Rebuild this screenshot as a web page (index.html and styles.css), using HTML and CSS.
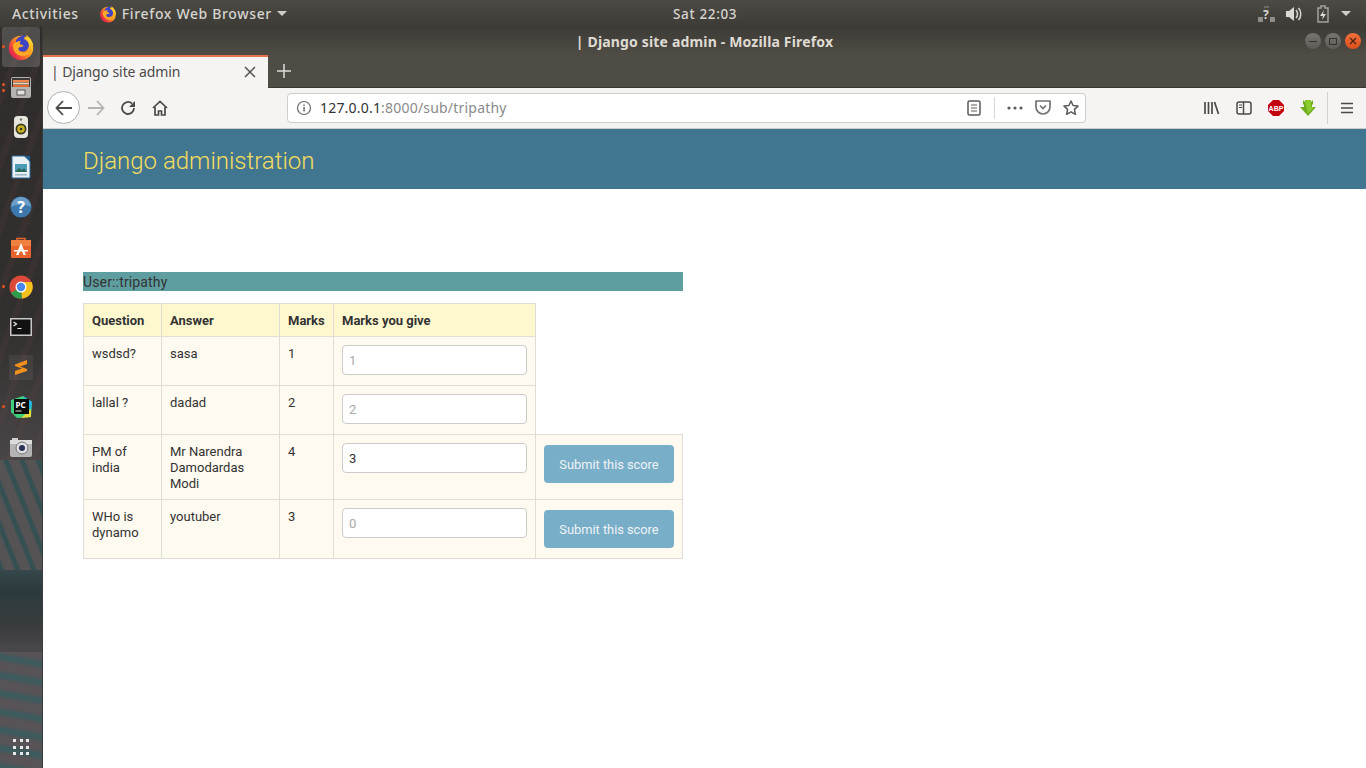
FILE: index.html
```html
<!DOCTYPE html>
<html lang="en">
<head>
    <meta charset="UTF-8">
    <title>| Django site admin - Mozilla Firefox</title>
    <link rel="stylesheet" href="styles.css">
</head>
<body>
    <svg class="sprite" width="0" height="0">
        <defs>
            <linearGradient id="foxOuter" x1="0.9" y1="0.1" x2="0.1" y2="0.7">
                <stop offset="0" stop-color="#ffd52c"/>
                <stop offset="0.5" stop-color="#ff8f1e"/>
                <stop offset="1" stop-color="#e8264e"/>
            </linearGradient>
            <symbol id="firefox" viewBox="0 0 32 32">
                <circle cx="16" cy="17" r="14" fill="url(#foxOuter)"/>
                <path d="M22 2c4 3 7 7 8 12l-4-2-3-5z" fill="#ffd230"/>
                <path d="M10 9c2-4 7-7 12-6-2 1-3 3-2 4 2 1 5 3 5 7 0 3-2 6-5 7-4 1-7-1-8-3z" fill="#3f44c4"/>
                <path d="M7 13c-1 7 4 13 11 13 5 0 8-3 9-7-2 2-5 4-9 3-3 0-5-2-5-4 0-1 1-2 3-2l3-1c-1-2-3-2-4-2-1-1 0-3 1-4-4 0-7 2-9 4z" fill="#ffab26"/>
            </symbol>
        </defs>
    </svg>

    <header class="topbar">
        <div class="topbar-left">
            <span class="activities">Activities</span>
            <svg class="app-icon" width="18" height="18"><use href="#firefox"/></svg>
            <span class="app-name">Firefox Web Browser</span>
            <span class="caret"></span>
        </div>
        <div class="clock">Sat 22:03</div>
        <div class="tray">
            <svg class="tray-net" width="20" height="18" viewBox="0 0 20 18" fill="#8f8d87">
                <rect x="7" y="1" width="5" height="2" opacity="0.5"/>
                <rect x="1" y="12" width="5" height="5"/>
                <rect x="13" y="12" width="5" height="5"/>
                <text x="6" y="14" class="tray-mark">?</text>
            </svg>
            <svg class="tray-vol" width="18" height="18" viewBox="0 0 18 18" fill="#dcdad5">
                <path d="M1 6h3l5-4v14l-5-4H1z"/>
                <path d="M11 5c2 2 2 6 0 8M13.500 3c3 3 3 9 0 12" fill="none" stroke="#dcdad5" stroke-width="1.500"/>
            </svg>
            <svg class="tray-batt" width="14" height="18" viewBox="0 0 14 18">
                <path d="M5 1h4v2h3v14H2V3h3z" fill="none" stroke="#a5a39d" stroke-width="1.500"/>
                <path d="M8 5l-4 6h3l-1 4 4-6H7z" fill="#dcdad5"/>
            </svg>
            <span class="caret"></span>
        </div>
    </header>

    <div class="desktop">
        <nav class="dock">
            <div class="dock-item dock-active">
                <span class="dot dot-one"></span>
                <svg width="28" height="28"><use href="#firefox"/></svg>
            </div>
            <div class="dock-item">
                <span class="dot dot-two"></span>
                <span class="dot dot-three"></span>
                <svg width="20" height="21" viewBox="0 0 20 21">
                    <rect width="20" height="21" rx="2" fill="#b5b3af"/>
                    <rect x="1" y="1" width="18" height="9" fill="#3c3836"/>
                    <rect x="2" y="3" width="16" height="2" fill="#f0854a"/>
                    <rect x="2" y="5.500" width="16" height="2" fill="#f6cfae"/>
                    <rect x="2" y="8" width="16" height="2" fill="#e06a30"/>
                    <rect x="6" y="13" width="8" height="5" fill="#e2e1de" stroke="#5a5957"/>
                </svg>
            </div>
            <div class="dock-item">
                <svg width="16" height="24" viewBox="0 0 16 24">
                    <rect x="1" y="1" width="14" height="22" rx="4" fill="#e6e6dc"/>
                    <circle cx="8" cy="14" r="5.500" fill="#3d3a22"/>
                    <circle cx="8" cy="14" r="3.800" fill="#c8b322"/>
                    <circle cx="8" cy="14" r="1.300" fill="#37342a"/>
                    <circle cx="8" cy="4.500" r="1.200" fill="#77766a"/>
                </svg>
            </div>
            <div class="dock-item">
                <svg width="20" height="24" viewBox="0 0 20 24">
                    <path d="M1 1h13l5 5v17H1z" fill="#e8f0f4" stroke="#2b6b9a"/>
                    <path d="M13 1h6v6z" fill="#1d5f91"/>
                    <rect x="4" y="9" width="12" height="8" fill="#4c9cb8"/>
                    <path d="M4 17l4-4 3 2 2-2 3 4z" fill="#2d6a5c"/>
                    <rect x="4" y="19" width="12" height="1.500" fill="#9cb4c2"/>
                </svg>
            </div>
            <div class="dock-item">
                <svg width="22" height="22" viewBox="0 0 22 22">
                    <circle cx="11" cy="11" r="10.500" fill="#3d78ad"/>
                    <path d="M1 11a10 10 0 0 1 20 0c-5-3-15-3-20 0z" fill="#6a9dc8"/>
                    <text x="11" y="17" class="help-mark">?</text>
                </svg>
            </div>
            <div class="dock-item">
                <svg width="20" height="22" viewBox="0 0 20 22">
                    <path d="M6 5V2.500h8V5" fill="none" stroke="#e8642c" stroke-width="1.600"/>
                    <rect y="4" width="20" height="18" rx="1" fill="#e8642c"/>
                    <rect y="4" width="20" height="6" fill="#f08040"/>
                    <path d="M10 7l5 12h-2.500l-2.500-6-2.500 6H5z" fill="#fff"/>
                    <rect x="3" y="14" width="14" height="1.500" fill="#fff"/>
                </svg>
            </div>
            <div class="dock-item">
                <span class="dot dot-one"></span>
                <svg width="24" height="24" viewBox="0 0 24 24">
                    <circle cx="12" cy="12" r="11.500" fill="#dd4a3c"/>
                    <path d="M12 12L2 18a11.500 11.500 0 0 0 11 5.500z" fill="#2f9e4c"/>
                    <path d="M12 7h10.600a11.500 11.500 0 0 1-9.600 16.500z" fill="#f3c21d"/>
                    <circle cx="12" cy="12" r="5.500" fill="#fff"/>
                    <circle cx="12" cy="12" r="4.200" fill="#4a87ec"/>
                </svg>
            </div>
            <div class="dock-item">
                <svg width="22" height="18" viewBox="0 0 22 18">
                    <rect x="0.750" y="0.750" width="20.500" height="16.500" fill="#111" stroke="#c8c8c8" stroke-width="1.500"/>
                    <path d="M3.500 4l3 2-3 2" fill="none" stroke="#eee" stroke-width="1.200"/>
                    <rect x="7.500" y="10" width="4" height="1" fill="#eee"/>
                </svg>
            </div>
            <div class="dock-item">
                <span class="dock-tile">
                    <svg width="12" height="15" viewBox="0 0 12 15">
                        <path d="M12 0v4L5 6.500 12 9v2L0 15v-4l7-2.500L0 6V4.500z" fill="#f39019"/>
                    </svg>
                </span>
            </div>
            <div class="dock-item">
                <span class="dot dot-one"></span>
                <svg width="24" height="24" viewBox="0 0 24 24">
                    <path d="M2 5l12-4 9 6-1 15-14 1-6-6z" fill="#3fd07c"/>
                    <path d="M14 1l9 6-1 9z" fill="#21b5e8"/>
                    <path d="M12 23l10-1 0-8z" fill="#e6d93a"/>
                    <rect x="5" y="4" width="15" height="15" fill="#0b0b0b"/>
                    <text x="6.500" y="12.500" class="pc-mark">PC</text>
                    <rect x="6.500" y="15.500" width="6" height="1" fill="#ddd"/>
                </svg>
            </div>
            <div class="dock-item">
                <svg width="22" height="20" viewBox="0 0 22 20">
                    <rect y="3" width="22" height="17" rx="2" fill="#b4b4b4"/>
                    <rect x="2" y="1" width="6" height="3" fill="#cfcfcf"/>
                    <rect y="3" width="22" height="4" fill="#dcdcdc"/>
                    <circle cx="12" cy="11" r="6" fill="#dedede" stroke="#777"/>
                    <circle cx="12" cy="11" r="3" fill="#27315a"/>
                </svg>
            </div>
            <div class="dock-grid">
                <span></span><span></span><span></span>
                <span></span><span></span><span></span>
                <span></span><span></span><span></span>
            </div>
        </nav>

        <main class="window">
            <div class="titlebar">
                <div class="window-title">| Django site admin - Mozilla Firefox</div>
                <div class="window-buttons">
                    <span class="win-btn"><i class="win-min"></i></span>
                    <span class="win-btn"><i class="win-max"></i></span>
                    <span class="win-btn win-close">
                        <svg width="8" height="8" viewBox="0 0 8 8"><path d="M1 1l6 6M7 1L1 7" stroke="#4a2415" stroke-width="1.300"/></svg>
                    </span>
                </div>
            </div>

            <div class="tabbar">
                <div class="tab">
                    <span class="tab-title">| Django site admin</span>
                    <svg width="12" height="12" viewBox="0 0 12 12"><path d="M1 1l10 10M11 1L1 11" stroke="#55534f" stroke-width="1.500"/></svg>
                </div>
                <svg class="new-tab" width="14" height="14" viewBox="0 0 14 14"><path d="M7 0v14M0 7h14" stroke="#dedcd8" stroke-width="1.500"/></svg>
            </div>

            <div class="toolbar">
                <span class="nav-back">
                    <svg width="18" height="16" viewBox="0 0 18 16"><path d="M8 1L1.500 8 8 15M2 8h15" fill="none" stroke="#4c4a48" stroke-width="1.800"/></svg>
                </span>
                <span class="tool-btn">
                    <svg width="18" height="16" viewBox="0 0 18 16"><path d="M10 1l6.500 7L10 15M16 8H1" fill="none" stroke="#b4b3b1" stroke-width="1.800"/></svg>
                </span>
                <span class="tool-btn">
                    <svg width="16" height="16" viewBox="0 0 16 16"><path d="M14 8a6 6 0 1 1-2-4.500" fill="none" stroke="#4c4a48" stroke-width="1.800"/><path d="M15 1v6H9z" fill="#4c4a48"/></svg>
                </span>
                <span class="tool-btn">
                    <svg width="16" height="16" viewBox="0 0 16 16"><path d="M1 8l7-6.500L15 8M3 7v8h3.500v-4h3v4H13V7" fill="none" stroke="#4c4a48" stroke-width="1.700"/></svg>
                </span>

                <div class="urlbar">
                    <svg width="16" height="16" viewBox="0 0 16 16"><circle cx="8" cy="8" r="6.500" fill="none" stroke="#6a6a6a" stroke-width="1.200"/><rect x="7.300" y="7" width="1.500" height="4.500" fill="#6a6a6a"/><rect x="7.300" y="4.500" width="1.500" height="1.500" fill="#6a6a6a"/></svg>
                    <span class="url-text"><span class="url-host">127.0.0.1</span>:8000/sub/tripathy</span>
                    <span class="url-actions">
                        <span class="url-btn">
                            <svg width="14" height="16" viewBox="0 0 14 16"><rect x="1" y="1" width="12" height="14" rx="1.500" fill="none" stroke="#5c5b59" stroke-width="1.500"/><path d="M4 5h6M4 8h6M4 11h6" stroke="#5c5b59" stroke-width="1.200"/></svg>
                        </span>
                        <span class="url-divider"></span>
                        <span class="url-btn">
                            <svg width="16" height="4" viewBox="0 0 16 4" fill="#5c5b59"><circle cx="2" cy="2" r="1.600"/><circle cx="8" cy="2" r="1.600"/><circle cx="14" cy="2" r="1.600"/></svg>
                        </span>
                        <span class="url-btn">
                            <svg width="16" height="15" viewBox="0 0 16 15"><path d="M1 1h14v6a7 7 0 0 1-14 0z" fill="none" stroke="#72716f" stroke-width="1.700" stroke-linejoin="round"/><path d="M5 5.500l3 3 3-3" fill="none" stroke="#72716f" stroke-width="1.700"/></svg>
                        </span>
                        <span class="url-btn">
                            <svg width="16" height="16" viewBox="0 0 16 16"><path d="M8 1l2.100 4.500 4.900.6-3.600 3.300 1 4.900L8 11.800l-4.400 2.500 1-4.900L1 6.100l4.900-.6z" fill="none" stroke="#5c5b59" stroke-width="1.500" stroke-linejoin="round"/></svg>
                        </span>
                    </span>
                </div>

                <div class="toolbar-right">
                    <span class="tool-btn">
                        <svg width="16" height="14" viewBox="0 0 16 14"><path d="M1 1v12M4.500 1v12M8 1v12M10.500 1l4 12" fill="none" stroke="#4c4a48" stroke-width="1.700"/></svg>
                    </span>
                    <span class="tool-btn">
                        <svg width="16" height="14" viewBox="0 0 16 14"><rect x="1" y="1" width="14" height="12" rx="2" fill="none" stroke="#4c4a48" stroke-width="1.500"/><path d="M7.500 1v12" stroke="#4c4a48" stroke-width="1.500"/><path d="M3 4h3M3 6.500h3" stroke="#4c4a48"/></svg>
                    </span>
                    <span class="tool-btn">
                        <svg width="16" height="16" viewBox="0 0 16 16"><path d="M5 0h6l5 5v6l-5 5H5l-5-5V5z" fill="#c40010"/><text x="8" y="10.800" class="abp-mark">ABP</text></svg>
                    </span>
                    <span class="tool-btn">
                        <svg width="16" height="16" viewBox="0 0 16 16"><path d="M3 0l2 2V0h6v2l2-2v4l-1 1v2h4l-8 9-8-9h4V5L3 4z" fill="#6fae1f"/><path d="M5 0h6v7h3l-6 7z" fill="#8ccb2c"/></svg>
                    </span>
                    <span class="toolbar-sep"></span>
                    <span class="tool-btn">
                        <svg width="12" height="12" viewBox="0 0 12 12"><path d="M0 1.500h12M0 6h12M0 10.500h12" stroke="#4c4a48" stroke-width="1.600"/></svg>
                    </span>
                </div>
            </div>

            <div class="page">
                <div class="site-header">Django administration</div>
                <div class="content">
                    <div class="user-bar">User::tripathy</div>
                    <table class="score-table">
                        <colgroup>
                            <col class="col-question">
                            <col class="col-answer">
                            <col class="col-marks">
                            <col class="col-give">
                            <col class="col-submit">
                        </colgroup>
                        <thead>
                            <tr>
                                <th>Question</th>
                                <th>Answer</th>
                                <th>Marks</th>
                                <th>Marks you give</th>
                            </tr>
                        </thead>
                        <tbody>
                            <tr>
                                <td>wsdsd?</td>
                                <td>sasa</td>
                                <td>1</td>
                                <td class="cell-input"><input class="score-input" type="text" placeholder="1"></td>
                            </tr>
                            <tr>
                                <td>lallal ?</td>
                                <td>dadad</td>
                                <td>2</td>
                                <td class="cell-input"><input class="score-input" type="text" placeholder="2"></td>
                            </tr>
                            <tr>
                                <td>PM of india</td>
                                <td>Mr Narendra Damodardas Modi</td>
                                <td>4</td>
                                <td><input class="score-input" type="text" value="3"></td>
                                <td><button class="score-btn" type="button">Submit this score</button></td>
                            </tr>
                            <tr>
                                <td>WHo is dynamo</td>
                                <td>youtuber</td>
                                <td>3</td>
                                <td><input class="score-input" type="text" placeholder="0"></td>
                                <td><button class="score-btn" type="button">Submit this score</button></td>
                            </tr>
                        </tbody>
                    </table>
                </div>
            </div>
        </main>
    </div>
</body>
</html>
```

FILE: styles.css
```css
* {
    box-sizing: border-box;
}
body {
    margin: 0;
    width: 1366px;
    height: 768px;
    overflow: hidden;
    display: flex;
    flex-direction: column;
    font-family: "Noto Sans", sans-serif;
    background-color: #fff;
}
svg {
    display: block;
    flex: none;
}
.sprite {
    position: absolute;
}

/* gnome top bar */
.topbar {
    height: 27px;
    flex: none;
    display: flex;
    align-items: center;
    padding: 0 15px 0 12px;
    background: linear-gradient(#4c4a44, #3d3b36);
    color: #d6d4cf;
    font-size: 14px;
    letter-spacing: 0.65px;
}
.topbar-left {
    flex: 0 0 661px;
    display: flex;
    align-items: center;
}
.activities {
    font-weight: 500;
}
.app-icon {
    margin-left: 20px;
}
.app-name {
    margin-left: 5px;
    font-weight: 500;
}
.caret {
    display: block;
    width: 0;
    height: 0;
    margin-left: 5px;
    border-left: 5px solid transparent;
    border-right: 5px solid transparent;
    border-top: 5px solid #d0cec9;
}
.clock {
    font-weight: 500;
    font-size: 13.500px;
}
.tray {
    margin-left: auto;
    display: flex;
    align-items: center;
}
.tray-net {
    margin-right: 8px;
}
.tray-vol {
    margin-right: 13px;
}
.tray-batt {
    margin-right: 6px;
}
.tray-mark {
    font: bold 12px "Noto Sans", sans-serif;
    fill: #dcdad5;
}

.desktop {
    flex: 1;
    display: flex;
    min-height: 0;
}

.dock {
    width: 43px;
    flex: none;
    display: flex;
    flex-direction: column;
    align-items: center;
    border-right: 1px solid #3a3a3a;
    background:
        repeating-linear-gradient(10deg, #3d5a5d 0 3px, #585356 7px 14px, #3d5a5d 18px) 0 625px / 100% 116px no-repeat,
        linear-gradient(#35474a, #2c3a3d 25%, #3a3c3e 70%, #4a484a) 0 543px / 100% 82px no-repeat,
        repeating-linear-gradient(68deg, #345053 0 3px, #565354 5px 13px, #345053 15px) 0 433px / 100% 110px no-repeat,
        repeating-linear-gradient(110deg, rgba(120, 80, 70, 0.1) 0 6px, transparent 6px 22px),
        linear-gradient(#2f2c2b 0, #322f2f 300px, #4a4647 433px);
}
.dock-item {
    width: 38px;
    height: 40px;
    flex: none;
    position: relative;
    display: flex;
    align-items: center;
    justify-content: center;
}
.dock-active {
    border-radius: 3px;
    background-color: rgba(255, 255, 255, 0.16);
}
.dot {
    position: absolute;
    left: 0;
    width: 3px;
    height: 3px;
    border-radius: 50%;
    background-color: #e9541f;
}
.dot-one {
    top: 18px;
}
.dot-two {
    top: 16px;
}
.dot-three {
    top: 22px;
}
.dock-tile {
    width: 24px;
    height: 25px;
    display: flex;
    align-items: center;
    justify-content: center;
    background-color: rgba(255, 255, 255, 0.06);
}
.help-mark {
    font: bold 16px "Noto Sans", sans-serif;
    fill: #fff;
    text-anchor: middle;
}
.pc-mark {
    font: bold 8px "Noto Sans", sans-serif;
    fill: #fff;
}
.dock-grid {
    margin-top: auto;
    margin-bottom: 13px;
    display: grid;
    grid-template-columns: repeat(3, 3px);
    gap: 3.500px;
}
.dock-grid span {
    width: 3px;
    height: 3px;
    background-color: #e8e8e8;
}

/* firefox window */
.window {
    flex: 1;
    min-width: 0;
    display: flex;
    flex-direction: column;
}
.titlebar {
    height: 28px;
    flex: none;
    display: flex;
    align-items: center;
    justify-content: center;
    position: relative;
    background: linear-gradient(#3d3b36, #4f4c45);
}
.window-title {
    color: #dfdbd2;
    font-size: 14px;
    font-weight: 700;
    letter-spacing: 0.17px;
}
.window-buttons {
    position: absolute;
    right: 5px;
    top: 6px;
    display: flex;
    gap: 4px;
}
.win-btn {
    width: 16px;
    height: 16px;
    border-radius: 50%;
    background: linear-gradient(#77756f, #5d5b55);
    display: flex;
    align-items: center;
    justify-content: center;
}
.win-close {
    background: linear-gradient(#f0703c, #dc4f1c);
}
.win-min {
    display: block;
    width: 8px;
    height: 1px;
    background-color: #35332f;
}
.win-max {
    display: block;
    width: 8px;
    height: 7px;
    border: 1px solid #35332f;
}
.tabbar {
    height: 33px;
    flex: none;
    display: flex;
    align-items: center;
    background-color: #4f4c45;
    border-bottom: 1px solid #3a3833;
}
.tab {
    width: 225px;
    height: 33px;
    display: flex;
    align-items: center;
    justify-content: space-between;
    padding: 0 12px 2px 8px;
    background-color: #f5f4f2;
    border-top: 2px solid #e9704d;
}
.tab-title {
    color: #4a4a4a;
    font-size: 14px;
    letter-spacing: -0.1px;
}
.tab svg {
    margin-top: 2px;
}
.new-tab {
    margin-left: 9px;
}
.toolbar {
    height: 41px;
    flex: none;
    display: flex;
    align-items: center;
    padding: 0 0 1px 4px;
    background-color: #f5f4f2;
    border-bottom: 1px solid #cfcdc9;
}
.nav-back {
    width: 33px;
    height: 33px;
    flex: none;
    display: flex;
    align-items: center;
    justify-content: center;
    border: 1px solid #b1afac;
    border-radius: 50%;
    background-color: #fff;
}
.tool-btn {
    width: 32px;
    height: 32px;
    flex: none;
    display: flex;
    align-items: center;
    justify-content: center;
}
.urlbar {
    width: 799px;
    height: 30px;
    margin-left: 111px;
    flex: none;
    display: flex;
    align-items: center;
    padding-left: 8px;
    background-color: #fff;
    border: 1px solid #cfcdca;
    border-radius: 4px;
}
.url-text {
    margin-left: 8px;
    color: #8a8a8a;
    font-size: 14px;
    letter-spacing: 0.2px;
}
.url-host {
    color: #333;
}
.url-actions {
    margin-left: auto;
    display: flex;
    align-items: center;
}
.url-btn {
    width: 28px;
    height: 28px;
    display: flex;
    align-items: center;
    justify-content: center;
}
.url-divider {
    width: 1px;
    height: 22px;
    margin: 0 6px;
    background-color: #d8d7d4;
}
.toolbar-right {
    margin-left: 110px;
    display: flex;
    align-items: center;
}
.toolbar-sep {
    width: 1px;
    height: 32px;
    margin: 0 3px 0 3px;
    background-color: #d4d2cf;
}
.abp-mark {
    font: bold 7px "Liberation Sans", sans-serif;
    fill: #fff;
    text-anchor: middle;
}

/* django page */
.page {
    flex: 1;
    font-family: Roboto, sans-serif;
    font-size: 13px;
    line-height: 16px;
    color: #333;
}
.site-header {
    height: 60px;
    padding: 3px 40px 0;
    display: flex;
    align-items: center;
    background-color: #417690;
    color: #f5dd5d;
    font-size: 24px;
    font-weight: 300;
}
.content {
    padding: 83px 40px 0;
}
.user-bar {
    width: 600px;
    height: 19px;
    margin-bottom: 12px;
    background-color: #5f9ea0;
    font-size: 14px;
    line-height: 21px;
    letter-spacing: 0.15px;
}
.score-table {
    width: 599px;
    table-layout: fixed;
    border-collapse: collapse;
}
.col-question {
    width: 78px;
}
.col-answer {
    width: 118px;
}
.col-marks {
    width: 54px;
}
.col-give {
    width: 202px;
}
.col-submit {
    width: 147px;
}
.score-table th,
.score-table td {
    padding: 9px 8px 7px;
    border: 1px solid #e0dcd6;
    text-align: left;
    vertical-align: top;
    font-size: 13px;
}
.score-table th {
    background-color: #fff8cf;
    font-weight: 700;
}
.score-table td {
    background-color: #fffaf0;
}
.score-table .cell-input {
    padding-bottom: 10px;
}
.score-input {
    display: block;
    width: 185px;
    height: 30px;
    margin-top: -1px;
    padding: 0 6px;
    background-color: #fff;
    border: 1px solid #ccc;
    border-radius: 4px;
    color: #333;
    font-family: Roboto, sans-serif;
    font-size: 13px;
}
.score-input::placeholder {
    color: #a9a9a9;
    opacity: 1;
}
.score-btn {
    display: block;
    width: 130px;
    height: 38px;
    margin: 1px 0 3px;
    background-color: #79aec8;
    border: none;
    border-radius: 4px;
    color: #eef3f6;
    font-family: Roboto, sans-serif;
    font-size: 12.800px;
}
```
